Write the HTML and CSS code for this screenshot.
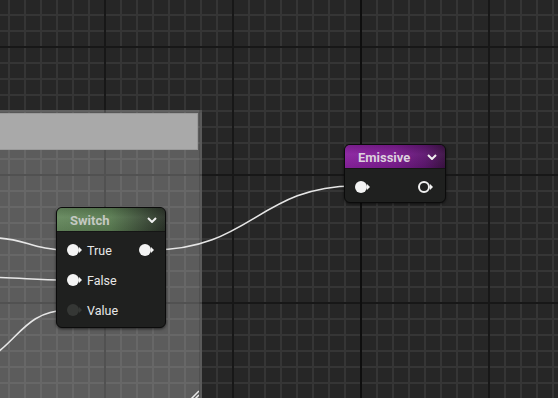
FILE: index.html
```html
<!DOCTYPE html>
<html>
<head>
<meta charset="utf-8">
<link rel="stylesheet" href="styles.css">
</head>
<body>
<div class="graph">
  <div class="comment">
    <div class="comment-title"></div>
    <svg class="resize" width="10" height="10" viewBox="0 0 10 10">
      <path d="M2 10 L10 2 M6 10 L10 6" stroke="#e8e8e8" stroke-width="1.5" fill="none"/>
    </svg>
  </div>

  <svg class="wires" width="558" height="398" viewBox="0 0 558 398">
    <g fill="none" stroke="#e6e6e6" stroke-width="1.6" stroke-linecap="round">
      <path d="M-2,238 C25,239 35,250 67,250"/>
      <path d="M-2,277.5 C25,278 35,280 67,280"/>
      <path d="M-2,352 C20,335 30,311 67,310"/>
      <path d="M152,250 C250,250 260,186 355,186"/>
    </g>
  </svg>

  <div class="node switch">
    <div class="node-header">
      <span class="node-title">Switch</span>
      <svg class="chev" width="10" height="6" viewBox="0 0 10 6"><path d="M1 1 L5 5 L9 1" stroke="#f0f0f0" stroke-width="2" fill="none"/></svg>
    </div>
    <div class="node-body">
      <div class="row">
        <div class="pin"><span class="dot"></span><span class="arrow"></span></div>
        <span class="label">True</span>
        <div class="pin out"><span class="dot"></span><span class="arrow"></span></div>
      </div>
      <div class="row">
        <div class="pin"><span class="dot"></span><span class="arrow"></span></div>
        <span class="label">False</span>
      </div>
      <div class="row">
        <div class="pin off"><span class="dot"></span><span class="arrow"></span></div>
        <span class="label">Value</span>
      </div>
    </div>
  </div>

  <div class="node emissive">
    <div class="node-header">
      <span class="node-title">Emissive</span>
      <svg class="chev" width="10" height="6" viewBox="0 0 10 6"><path d="M1 1 L5 5 L9 1" stroke="#f0f0f0" stroke-width="2" fill="none"/></svg>
    </div>
    <div class="node-body">
      <div class="row">
        <div class="pin"><span class="dot"></span><span class="arrow"></span></div>
        <div class="pin out hollow"><span class="dot"></span><span class="arrow"></span></div>
      </div>
    </div>
  </div>
</div>
</body>
</html>
```

FILE: styles.css
```css
html, body {
  margin: 0;
  padding: 0;
  width: 558px;
  height: 398px;
  overflow: hidden;
  background: #262626;
}

.graph {
  position: relative;
  width: 558px;
  height: 398px;
  overflow: hidden;
  font-family: Roboto, "Liberation Sans", sans-serif;
  background-color: #262626;
  background-image:
    linear-gradient(to right, transparent 360px, #0e0e0e 360px, #0e0e0e 362px, transparent 362px),
    linear-gradient(to right, #171717 2px, transparent 2px),
    linear-gradient(to bottom, #171717 2px, transparent 2px),
    linear-gradient(to right, #353535 2px, transparent 2px),
    linear-gradient(to bottom, #353535 2px, transparent 2px);
  background-size:
    558px 398px,
    128px 128px,
    128px 128px,
    16px 16px,
    16px 16px;
  background-position:
    0 0,
    104px 0,
    0 46px,
    8px 0,
    0 14px;
  background-repeat: no-repeat, repeat, repeat, repeat, repeat;
}

.comment {
  position: absolute;
  left: -4px;
  top: 110px;
  width: 206px;
  height: 300px;
  background: rgba(255, 255, 255, 0.25);
  box-shadow: inset -3px 0 0 rgba(0, 0, 0, 0.12), inset 0 3px 0 rgba(0, 0, 0, 0.05);
}

.comment-title {
  margin: 3px 4px 0 3px;
  height: 37px;
  background: #a9a9a9;
  border: 1px solid #9a9a9a;
  box-sizing: border-box;
}

.resize {
  position: absolute;
  right: 3px;
  bottom: 11px;
}

.wires {
  position: absolute;
  left: 0;
  top: 0;
}

.node {
  position: absolute;
  background: #1f201f;
  border: 1px solid #0b0b0b;
  border-radius: 6px;
  box-shadow: 0 1px 3px rgba(0, 0, 0, 0.6);
  box-sizing: border-box;
  overflow: hidden;
}

.switch {
  left: 56px;
  top: 207px;
  width: 110px;
  height: 121px;
}

.emissive {
  left: 344px;
  top: 144px;
  width: 102px;
  height: 59px;
}

.node-header {
  display: flex;
  align-items: center;
  justify-content: space-between;
  height: 24px;
  padding: 1px 8px 0 13px;
  border-bottom: 1px solid #151515;
  box-sizing: border-box;
}

.switch .node-header {
  background:
    linear-gradient(to bottom, rgba(0, 0, 0, 0.12), rgba(255, 255, 255, 0.04) 40%, rgba(0, 0, 0, 0.08)),
    linear-gradient(to right, #66895e, #5a7c52 50%, #3e4f3a 80%, #2a3228);
}

.emissive .node-header {
  background:
    linear-gradient(to bottom, rgba(0, 0, 0, 0.12), rgba(255, 255, 255, 0.04) 40%, rgba(0, 0, 0, 0.08)),
    linear-gradient(to right, #8a22a0, #7c1c90 50%, #5e1670 80%, #3c1244);
}

.node-title {
  font-size: 13px;
  font-weight: bold;
  color: #c4c9c3;
}

.emissive .node-title {
  color: #dcd0de;
}

.chev {
  display: block;
}

.node-body {
  padding: 3px 0 0 0;
}

.row {
  display: flex;
  align-items: center;
  height: 30px;
  padding-left: 10px;
  padding-right: 11px;
}

.emissive .row {
  justify-content: space-between;
  padding-right: 12px;
}

.label {
  margin-left: 5px;
  font-size: 12.5px;
  color: #e8e8e8;
}

.pin {
  display: flex;
  align-items: center;
}

.pin.out {
  margin-left: auto;
}

.dot {
  width: 12px;
  height: 12px;
  border-radius: 50%;
  background: #f4f4f4;
  box-sizing: border-box;
}

.arrow {
  width: 0;
  height: 0;
  border-top: 3px solid transparent;
  border-bottom: 3px solid transparent;
  border-left: 3px solid #f4f4f4;
}

.pin.off .dot {
  background: #353735;
}

.pin.off .arrow {
  border-left-color: #353735;
}

.pin.hollow .dot {
  background: transparent;
  border: 2px solid #f0f0f0;
}
```
